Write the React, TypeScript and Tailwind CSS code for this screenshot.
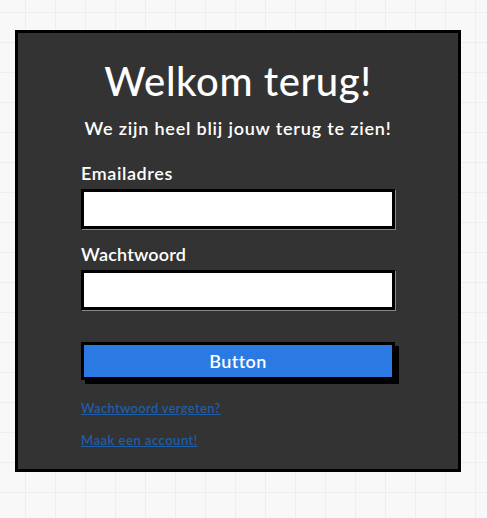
import React from "react";

const font = { fontFamily: "Lato, 'Open Sans', sans-serif" };

function SketchInput() {
  return (
    <div className="h-[40px] w-full border-[3px] border-black bg-white shadow-[1px_1px_0_#888]" />
  );
}

export default function App() {
  return (
    <div
      className="h-[518px] w-[487px] overflow-hidden bg-[#f8f8f8] bg-[linear-gradient(#eeeeee_1px,transparent_1px),linear-gradient(90deg,#eeeeee_1px,transparent_1px)] bg-[size:30px_30px] bg-[position:25px_12px] pt-[30px] pl-[15px]"
      style={font}
    >
      <div className="h-[442px] w-[446px] border-[3px] border-black bg-[#333333] pt-[22px]">
        <div className="mx-auto flex w-[314px] flex-col">
          <h1 className="text-center text-[40px] leading-[52px] font-medium tracking-[0.6px] text-white">
            Welkom terug!
          </h1>
          <p className="mt-[9px] text-center text-[18px] leading-[24px] font-semibold tracking-[0.8px] text-white">
            We zijn heel blij jouw terug te zien!
          </p>

          <label className="mt-[22px] text-[18px] leading-[22px] font-semibold tracking-[0.6px] text-white">
            Emailadres
          </label>
          <div className="mt-[5px]">
            <SketchInput />
          </div>

          <label className="mt-[14px] text-[18px] leading-[22px] font-semibold tracking-[0.2px] text-white">
            Wachtwoord
          </label>
          <div className="mt-[5px]">
            <SketchInput />
          </div>

          <button className="mt-[32px] h-[38px] w-full border-[3px] border-black bg-[#2b79e3] text-[18px] font-semibold tracking-[0.4px] text-white shadow-[4px_4px_0_#000]">
            Button
          </button>

          <a href="#" className="mt-[20px] w-fit text-[13px] leading-[16px] font-semibold tracking-[0.3px] text-[#1d5ea8] underline">
            Wachtwoord vergeten?
          </a>
          <a href="#" className="mt-[16px] w-fit text-[13px] leading-[16px] font-semibold tracking-[0.5px] text-[#1d5ea8] underline">
            Maak een account!
          </a>
        </div>
      </div>
    </div>
  );
}
